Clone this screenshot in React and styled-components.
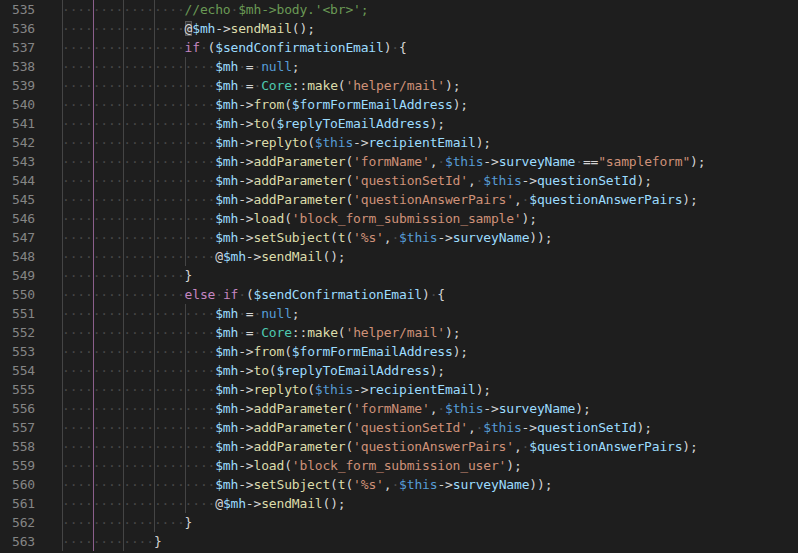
import React from 'react';
import styled, { createGlobalStyle } from 'styled-components';

const GlobalStyle = createGlobalStyle`
  html, body {
    margin: 0;
    padding: 0;
    background: #1e1e1e;
  }
`;

const source = [
  [535, 4, "//echo $mh->body.'<br>';"],
  [536, 4, '@$mh->sendMail();'],
  [537, 4, 'if ($sendConfirmationEmail) {'],
  [538, 5, '$mh = null;'],
  [539, 5, "$mh = Core::make('helper/mail');"],
  [540, 5, '$mh->from($formFormEmailAddress);'],
  [541, 5, '$mh->to($replyToEmailAddress);'],
  [542, 5, '$mh->replyto($this->recipientEmail);'],
  [543, 5, `$mh->addParameter('formName', $this->surveyName =="sampleform");`],
  [544, 5, "$mh->addParameter('questionSetId', $this->questionSetId);"],
  [545, 5, "$mh->addParameter('questionAnswerPairs', $questionAnswerPairs);"],
  [546, 5, "$mh->load('block_form_submission_sample');"],
  [547, 5, "$mh->setSubject(t('%s', $this->surveyName));"],
  [548, 5, '@$mh->sendMail();'],
  [549, 4, '}'],
  [550, 4, 'else if ($sendConfirmationEmail) {'],
  [551, 5, '$mh = null;'],
  [552, 5, "$mh = Core::make('helper/mail');"],
  [553, 5, '$mh->from($formFormEmailAddress);'],
  [554, 5, '$mh->to($replyToEmailAddress);'],
  [555, 5, '$mh->replyto($this->recipientEmail);'],
  [556, 5, "$mh->addParameter('formName', $this->surveyName);"],
  [557, 5, "$mh->addParameter('questionSetId', $this->questionSetId);"],
  [558, 5, "$mh->addParameter('questionAnswerPairs', $questionAnswerPairs);"],
  [559, 5, "$mh->load('block_form_submission_user');"],
  [560, 5, "$mh->setSubject(t('%s', $this->surveyName));"],
  [561, 5, '@$mh->sendMail();'],
  [562, 4, '}'],
  [563, 3, '}'],
];

const colors = {
  comment: '#6a9955',
  keyword: '#c586c0',
  variable: '#9cdcfe',
  builtin: '#569cd6',
  type: '#4ec9b0',
  func: '#dcdcaa',
  string: '#ce9178',
  punct: '#d4d4d4',
};

// rough php tokenizer, good enough for these lines
const tokenize = (text) => {
  const out = [];
  const re = /(\/\/.*)|('[^']*'|"[^"]*")|(\$\w+)|([A-Za-z_]\w*)|( )|(->|::|==|.)/g;
  let m;
  let prev = '';
  while ((m = re.exec(text))) {
    if (m[1]) {
      m[1].split(/( )/).forEach((part) => {
        if (part === ' ') out.push({ kind: 'space' });
        else if (part) out.push({ kind: 'comment', text: part });
      });
    } else if (m[2]) {
      out.push({ kind: 'string', text: m[2] });
    } else if (m[3]) {
      out.push({ kind: m[3] === '$this' ? 'builtin' : 'variable', text: m[3] });
    } else if (m[4]) {
      const word = m[4];
      const next = text[re.lastIndex];
      let kind = 'variable';
      if (word === 'if' || word === 'else') kind = 'keyword';
      else if (word === 'null') kind = 'builtin';
      else if (word === 'Core') kind = 'type';
      else if (next === '(') kind = 'func';
      else if (prev === '->') kind = 'variable';
      out.push({ kind, text: word });
    } else if (m[5]) {
      out.push({ kind: 'space' });
    } else {
      out.push({ kind: 'punct', text: m[6] });
    }
    prev = m[0];
  }
  return out;
};

const App = () => {
  return (
    <>
      <GlobalStyle />
      <Editor>
        {source.map(([num, depth, text]) => (
          <Row key={num}>
            <LineNumber>{num}</LineNumber>
            <Code>
              {Array.from({ length: depth }).map((_, i) => (
                <Indent key={i} $active={i === 1}>
                  ····
                </Indent>
              ))}
              {tokenize(text).map((t, i) =>
                t.kind === 'space' ? (
                  <Dot key={i}>·</Dot>
                ) : t.text === '@' && num === 536 ? (
                  <Match key={i}>@</Match>
                ) : (
                  <Token key={i} $color={colors[t.kind]}>
                    {t.text}
                  </Token>
                )
              )}
            </Code>
          </Row>
        ))}
      </Editor>
    </>
  );
};

export default App;

const Editor = styled.div`
  width: 798px;
  height: 553px;
  overflow: hidden;
  background: #1e1e1e;
  font-family: 'DejaVu Sans Mono', 'Liberation Mono', monospace;
  font-size: 13px;
  letter-spacing: -0.17px;
`;

const Row = styled.div`
  display: flex;
  height: 19px;
  line-height: 19px;
`;

const LineNumber = styled.div`
  width: 35px;
  padding-right: 27px;
  text-align: right;
  color: #858585;
  flex-shrink: 0;
`;

const Code = styled.div`
  white-space: pre;
  color: #d4d4d4;
`;

const Indent = styled.span`
  display: inline-block;
  height: 19px;
  vertical-align: top;
  color: #464646;
  box-shadow: inset 1px 0 0 ${(p) => (p.$active ? '#8c5f8c' : '#454545')};
`;

const Dot = styled.span`
  color: #4a4a4a;
`;

const Token = styled.span`
  color: ${(p) => p.$color};
`;

const Match = styled.span`
  color: #d4d4d4;
  background: #343434;
  box-shadow: inset 0 0 0 1px #5a5a5a;
`;
